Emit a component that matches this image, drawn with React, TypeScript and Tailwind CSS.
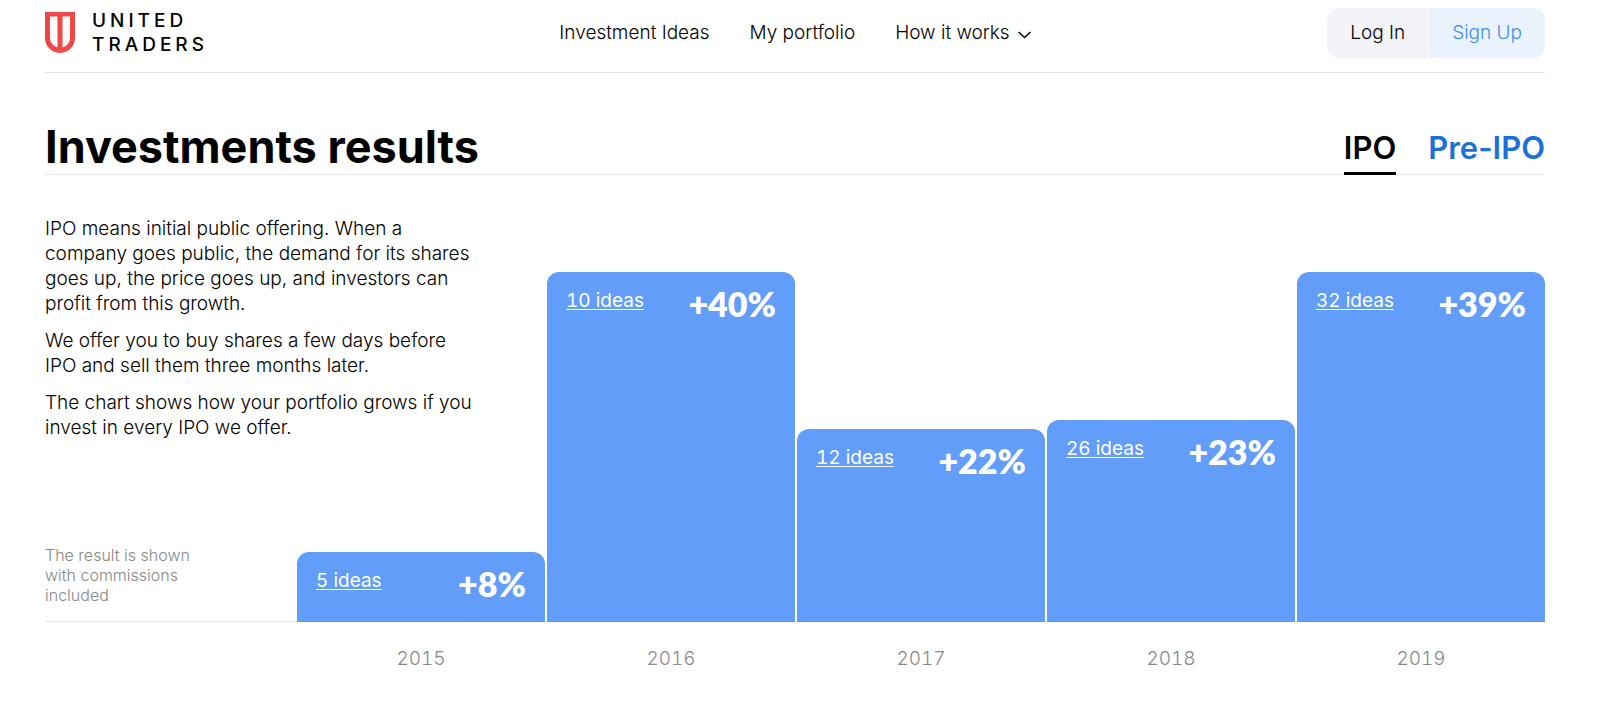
const results = [
  { year: 2015, ideas: 5, growth: 8, height: 70 },
  { year: 2016, ideas: 10, growth: 40, height: 350 },
  { year: 2017, ideas: 12, growth: 22, height: 193 },
  { year: 2018, ideas: 26, growth: 23, height: 202 },
  { year: 2019, ideas: 32, growth: 39, height: 350 },
];

const Logo = () => (
  <a href="#" className="flex items-center gap-4">
    <svg width="31" height="42" viewBox="0 0 31 42" className="text-[#f04747]">
      <path
        fill="currentColor"
        fillRule="evenodd"
        d="M0 0H30V26A15 15 0 0 1 15 41A15 15 0 0 1 0 26ZM5 4.5V26A10 10 0 0 0 12.5 35.6V4.5ZM17.5 4.5V35.6A10 10 0 0 0 25 26V4.5Z"
      />
    </svg>
    <span className="text-[19px] leading-6 tracking-[4px] font-medium">
      UNITED
      <br />
      TRADERS
    </span>
  </a>
);

const Header = () => (
  <header className="flex items-start justify-between h-[73px] pt-2 border-b border-[#e5e5e5]">
    <div className="flex-1 pt-px">
      <Logo />
    </div>
    <nav className="flex items-center gap-10 h-[50px] text-[19px] font-light">
      <a href="#">Investment Ideas</a>
      <a href="#">My portfolio</a>
      <button type="button" className="flex items-center gap-2">
        How it works
        <svg width="13" height="8" viewBox="0 0 13 8" fill="none" stroke="currentColor" strokeWidth="1.5" className="mt-1">
          <path d="M0.5 1L6.5 6.5L12.5 1" />
        </svg>
      </button>
    </nav>
    <div className="flex-1 flex justify-end gap-px text-[19px] font-light">
      <button type="button" className="h-[50px] px-[23px] rounded-l-xl bg-[#f3f4f8]">
        Log In
      </button>
      <button type="button" className="h-[50px] px-[23px] rounded-r-xl bg-[#eaf3fd] text-[#3f8ff2]">
        Sign Up
      </button>
    </div>
  </header>
);

export default function App() {
  return (
    <div className="min-h-screen bg-white text-black font-[Inter,sans-serif] pl-[45px] pr-[70px]">
      <Header />

      <main>
        <div className="flex items-end justify-between mt-[47px] border-b border-[#e5e5e5]">
          <h1 className="text-[45px] leading-[54px] font-bold">Investments results</h1>
          <div className="flex gap-8 -mb-px text-[31px] leading-9 font-semibold">
            <button type="button" className="pb-1.5 border-b-3 border-black">
              IPO
            </button>
            <button type="button" className="pb-1.5 border-b-3 border-transparent text-[#1c71d8]">
              Pre-IPO
            </button>
          </div>
        </div>

        <div className="grid grid-cols-[250px_repeat(5,1fr)] gap-x-[2px] mt-[41px] border-b border-[#e5e5e5]">
          <div className="col-start-1 col-span-2 row-start-1 self-start space-y-3 pr-17 text-[19px] leading-[25px] font-light">
            <p>
              IPO means initial public offering. When a company goes public, the demand for its shares
              goes up, the price goes up, and investors can profit from this growth.
            </p>
            <p>We offer you to buy shares a few days before IPO and sell them three months later.</p>
            <p>The chart shows how your portfolio grows if you invest in every IPO we offer.</p>
          </div>
          <p className="col-start-1 row-start-1 self-end w-40 mb-4 text-base leading-5 font-light text-[#888]">
            The result is shown with commissions included
          </p>
          <div className="col-start-2 col-span-5 row-start-1 flex items-end gap-[2px] pt-14 -mb-px">
            {results.map((r) => (
              <div
                key={r.year}
                className="flex-1 flex items-start justify-between px-[19px] pt-3.5 rounded-t-xl bg-[#629dfa] border-b border-[#5d95ed] text-white"
                style={{ height: r.height }}
              >
                <a href="#" className="mt-[3px] text-[19px] leading-6 tabular-nums underline underline-offset-2 decoration-1">
                  {r.ideas} ideas
                </a>
                <span className="font-[Lato,sans-serif] text-[34px] leading-9 font-extrabold">+{r.growth}%</span>
              </div>
            ))}
          </div>
        </div>

        <div className="grid grid-cols-[250px_repeat(5,1fr)] gap-x-[2px] pt-[23px] text-center text-[19px] leading-7 font-light tabular-nums text-[#888]">
          {results.map((r) => (
            <span key={r.year} className="first:col-start-2">
              {r.year}
            </span>
          ))}
        </div>
      </main>
    </div>
  );
}
